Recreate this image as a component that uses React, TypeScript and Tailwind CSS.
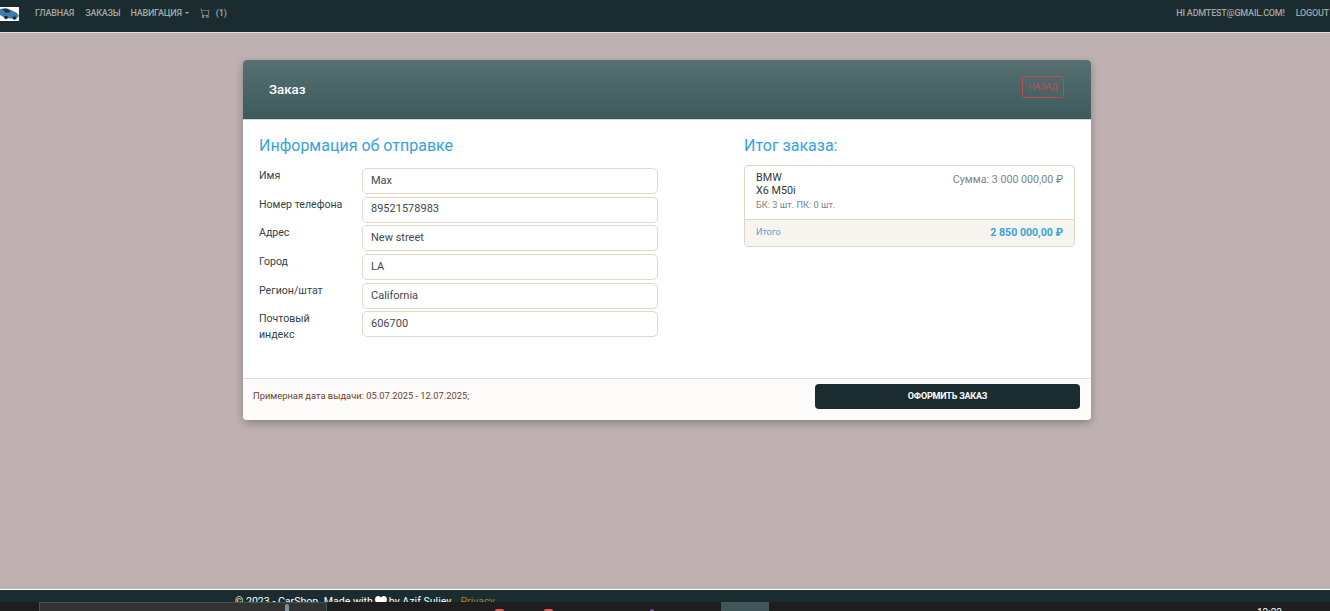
import { BsCart } from 'react-icons/bs';

const fields = [
  { label: 'Имя', value: 'Max' },
  { label: 'Номер телефона', value: '89521578983' },
  { label: 'Адрес', value: 'New street' },
  { label: 'Город', value: 'LA' },
  { label: 'Регион/штат', value: 'California' },
  { label: 'Почтовый индекс', value: '606700' },
];

function Logo() {
  return (
    <svg width="19" height="14" viewBox="0 0 19 14" className="block">
      <rect width="19" height="14" fill="#fff" />
      <path d="M0 2 L6 1 L11 3 L17 6 L19 9 L16 12 L5 11 L0 8 Z" fill="#3f7ea6" />
      <path d="M2 2 L8 2 L11 5 L6 6 Z" fill="#1f3a4c" />
      <circle cx="6" cy="10.5" r="1.8" fill="#1c2630" />
      <circle cx="14.5" cy="11" r="1.8" fill="#1c2630" />
    </svg>
  );
}

export default function App() {
  return (
    <div className="h-[611px] overflow-hidden bg-[#bfb1b1] flex flex-col font-['Roboto',sans-serif]">
      {/* Navbar */}
      <nav className="h-[33px] shrink-0 bg-[#1a2c30] border-b border-[#e4ded8] flex items-start pt-[7px] text-[9px] leading-[12px] tracking-[-0.2px] uppercase text-[#a3a8a6] font-medium">
        <div className="flex-1 flex items-start">
          <Logo />
          <a className="ml-4">Главная</a>
          <a className="ml-[11px]">Заказы</a>
          <a className="ml-[10px]">Навигация</a>
          <span className="ml-[3px] mt-[5px] border-x-[2px] border-t-[2px] border-x-transparent border-t-[#a3a8a6]" />
          <BsCart size={10} className="ml-[11px] mt-[1px]" />
          <span className="ml-[6px]">(1)</span>
        </div>
        <div className="flex items-start pr-[1px]">
          <span className="whitespace-nowrap">Hi admtest@gmail.com!</span>
          <span className="ml-[11px]">Logout</span>
        </div>
      </nav>

      {/* Main */}
      <main className="flex-1 min-h-0 pt-[27px] pl-[4px] flex justify-center">
        <div className="w-[848px] h-[360px] rounded-[4px] bg-white shadow-[0_3px_8px_rgba(0,0,0,0.28)] flex flex-col overflow-hidden">
          <div className="h-[60px] shrink-0 bg-gradient-to-b from-[#577072] to-[#3c5a5c] border-b border-[#d5d6c8] pl-[26px] pr-[27px] flex items-center justify-between">
            <h1 className="text-[13.3px] font-medium text-white">Заказ</h1>
            <button className="w-[42px] h-[22px] -mt-[5px] pt-[1px] rounded-[3px] border border-[#bd4c4c] text-[9px] tracking-[-0.2px] uppercase text-[#c84a4a]">
              Назад
            </button>
          </div>

          <div className="flex-1 min-h-0 flex px-[16px] pt-[15px]">
            <section className="w-[399px] shrink-0">
              <h2 className="text-[16px] leading-[22px] text-[#36a3dc] mb-[11px]">Информация об отправке</h2>
              <div className="flex flex-col gap-[2.7px]">
                {fields.map((f) => (
                  <div key={f.label} className="flex items-start h-[26px]">
                    <label className="w-[103px] shrink-0 text-[10.6px] leading-[16px] text-[#32424a] pr-[12px]">
                      {f.label === 'Почтовый индекс' ? (
                        <>
                          Почтовый
                          <br />
                          индекс
                        </>
                      ) : (
                        f.label
                      )}
                    </label>
                    <div className="w-[296px] h-[26px] rounded-[5px] border border-[#e3d7cb] pl-[8px] flex items-center text-[11px] text-[#44484c]">
                      {f.value}
                    </div>
                  </div>
                ))}
              </div>
            </section>

            <section className="ml-[86px] flex-1">
              <h2 className="text-[16px] leading-[22px] text-[#36a3dc] mb-[8px]">Итог заказа:</h2>
              <div className="rounded-[4px] border border-[#ddd5c7] overflow-hidden">
                <div className="h-[53px] px-[11px] pt-[5px] flex justify-between">
                  <div>
                    <div className="text-[10.8px] leading-[13px] text-[#33393c]">BMW</div>
                    <div className="text-[10.8px] leading-[13px] text-[#33393c]">X6 M50i</div>
                    <div className="mt-[2px] text-[9.25px] leading-[12px] text-[#7d8487]">БК: 3 шт. ПК: 0 шт.</div>
                  </div>
                  <div className="mt-[2px] text-[10.7px] leading-[14px] text-[#7d8487]">Сумма: 3 000 000,00 ₽</div>
                </div>
                <div className="h-[27px] bg-[#f7f4f0] border-t border-[#ddd5c7] px-[11px] flex items-center justify-between">
                  <span className="text-[9px] text-[#5a9fd0]">Итого</span>
                  <span className="text-[10.6px] font-bold text-[#36a3dc]">2 850 000,00 ₽</span>
                </div>
              </div>
            </section>
          </div>

          <div className="h-[42px] shrink-0 bg-[#fefcfa] border-t border-[#e8dfd6] pl-[10px] pr-[11px] pt-[5px] flex items-start justify-between">
            <span className="mt-[6px] text-[9.35px] leading-[12px] text-[#6b3f30]">Примерная дата выдачи: 05.07.2025 - 12.07.2025;</span>
            <button className="w-[265px] h-[25px] rounded-[4px] bg-[#1a2c30] text-[9px] tracking-[-0.2px] font-bold uppercase text-white">
              Оформить заказ
            </button>
          </div>
        </div>
      </main>

      {/* Footer */}
      <footer className="h-[13px] shrink-0 bg-[#1a2c30] border-t border-white overflow-hidden pl-[235px] text-[10.6px] leading-[13px] text-white pt-[5px] flex items-start whitespace-nowrap">
        <span>© 2023 - CarShop. Made with</span>
        <svg width="12" height="11" viewBox="0 0 12 11" className="mx-[2px] mt-[1px] shrink-0">
          <path d="M6 11 C2 8 0 6 0 3.5 C0 1.5 1.5 0 3.2 0 C4.4 0 5.4 .6 6 1.5 C6.6 .6 7.6 0 8.8 0 C10.5 0 12 1.5 12 3.5 C12 6 10 8 6 11 Z" fill="#fff" />
        </svg>
        <span>by Azif Suliev</span>
        <span className="ml-[9px] text-[#94843a]">Privacy</span>
      </footer>

      {/* Taskbar */}
      <div className="h-[9px] shrink-0 bg-[#1e1e1e] relative overflow-hidden">
        <div className="absolute left-[39px] top-0 w-[288px] h-[9px] bg-[#333] border-x border-t border-[#3f5557]" />
        <div className="absolute left-[285px] top-[2px] w-[4px] h-[7px] rounded-t-[2px] bg-[#7f929c]" />
        <div className="absolute left-[495px] top-[7px] w-[9px] h-[2px] rounded-t-[2px] bg-[#d4605f]" />
        <div className="absolute left-[544px] top-[7px] w-[9px] h-[2px] rounded-t-[2px] bg-[#d4605f]" />
        <div className="absolute left-[650px] top-[7px] w-[4px] h-[2px] rounded-t-[2px] bg-[#7a5a9c]" />
        <div className="absolute left-[721px] top-0 w-[48px] h-[9px] bg-[#405658]" />
        <span className="absolute left-[1257px] top-[5px] text-[10px] leading-[12px] text-white">12:22</span>
      </div>
    </div>
  );
}
